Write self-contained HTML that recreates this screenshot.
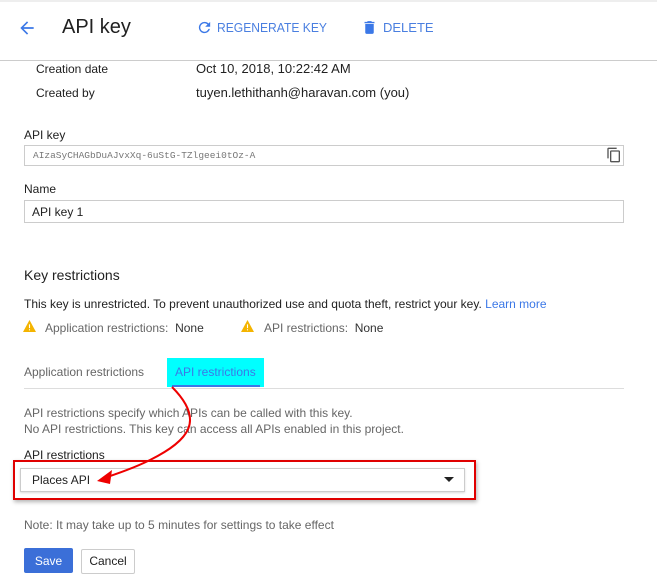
<!DOCTYPE html>
<html><head><style>
body{margin:0;width:657px;height:573px;background:#fff;font-family:"Liberation Sans",Arial,sans-serif;color:#212121;position:relative;overflow:hidden}
.a{position:absolute;white-space:nowrap}
.lbl{font-size:12px;color:#212121}
.in{position:absolute;border:1px solid #ccc;background:#fff;box-sizing:border-box}
.g{color:#666;font-size:12px}
</style></head><body>
<div class="a" style="left:0;top:0;width:657px;height:2px;background:#eee"></div>
<svg class="a" style="left:17px;top:18px" width="20" height="20" viewBox="0 0 24 24"><path d="M20 11H7.8l5.6-5.6L12 4l-8 8 8 8 1.4-1.4L7.8 13H20z" fill="#3b78e7"/></svg>
<div class="a" style="left:62px;top:16px;font-size:20px;color:#212121">API key</div>
<svg class="a" style="left:196px;top:19px" width="17" height="17" viewBox="0 0 24 24"><path d="M17.65 6.35A7.96 7.96 0 0 0 12 4a8 8 0 1 0 7.73 10h-2.08A6 6 0 1 1 12 6c1.66 0 3.14.69 4.22 1.78L13 11h7V4z" fill="#3b78e7"/></svg>
<div class="a" style="left:217px;top:20px;font-size:13px;color:#4a7fe0;transform:scaleX(.93);transform-origin:left">REGENERATE KEY</div>
<svg class="a" style="left:361px;top:19px" width="17" height="17" viewBox="0 0 24 24"><path d="M6 19c0 1.1.9 2 2 2h8c1.1 0 2-.9 2-2V7H6zM19 4h-3.5l-1-1h-5l-1 1H5v2h14z" fill="#3b78e7"/></svg>
<div class="a" style="left:383px;top:20px;font-size:13px;color:#4a7fe0">DELETE</div>
<div class="a" style="left:0;top:60px;width:657px;height:1px;background:#ccc"></div>
<div class="a lbl" style="left:36px;top:62px">Creation date</div>
<div class="a" style="left:196px;top:61px;font-size:13px">Oct 10, 2018, 10:22:42 AM</div>
<div class="a lbl" style="left:36px;top:86px">Created by</div>
<div class="a" style="left:196px;top:85px;font-size:13px">tuyen.lethithanh@haravan.com (you)</div>
<div class="a lbl" style="left:24px;top:128px">API key</div>
<div class="in" style="left:24px;top:145px;width:600px;height:21px"></div>
<div class="a" style="left:33px;top:150px;font-family:'Liberation Mono',monospace;font-size:9.5px;color:#777">AIzaSyCHAGbDuAJvxXq-6uStG-TZlgeei0tOz-A</div>
<svg class="a" style="left:606px;top:147px" width="16" height="16" viewBox="0 0 24 24"><path d="M16 1H4a2 2 0 0 0-2 2v14h2V3h12zm3 4H8a2 2 0 0 0-2 2v14a2 2 0 0 0 2 2h11a2 2 0 0 0 2-2V7a2 2 0 0 0-2-2zm0 16H8V7h11z" fill="#555"/></svg>
<div class="a lbl" style="left:24px;top:182px">Name</div>
<div class="in" style="left:24px;top:200px;width:600px;height:23px"></div>
<div class="a" style="left:32px;top:205px;font-size:12px">API key 1</div>
<div class="a" style="left:24px;top:267px;font-size:14px">Key restrictions</div>
<div class="a" style="left:24px;top:297px;font-size:12px">This key is unrestricted. To prevent unauthorized use and quota theft, restrict your key. <span style="color:#3b78e7">Learn more</span></div>
<svg class="a" style="left:23px;top:320px" width="13" height="12" viewBox="0 0 24 22"><path d="M12 0L0 22h24z" fill="#f4b400"/><path d="M11 8h2v7h-2zM11 17h2v2h-2z" fill="#fff"/></svg>
<div class="a g" style="left:45px;top:321px">Application restrictions:&nbsp; <span style="color:#333">None</span></div>
<svg class="a" style="left:241px;top:320px" width="13" height="12" viewBox="0 0 24 22"><path d="M12 0L0 22h24z" fill="#f4b400"/><path d="M11 8h2v7h-2zM11 17h2v2h-2z" fill="#fff"/></svg>
<div class="a g" style="left:264px;top:321px">API restrictions:&nbsp; <span style="color:#333">None</span></div>
<div class="a g" style="left:24px;top:365px">Application restrictions</div>
<div class="a" style="left:167px;top:358px;width:97px;height:29px;background:#00ffff"></div>
<div class="a" style="left:175px;top:365px;font-size:12px;color:#3b78e7">API restrictions</div>
<div class="a" style="left:172px;top:385px;width:88px;height:2px;background:#3b78e7"></div>
<div class="a" style="left:24px;top:388px;width:600px;height:1px;background:#ddd"></div>
<div class="a g" style="left:24px;top:406px">API restrictions specify which APIs can be called with this key.</div>
<div class="a g" style="left:24px;top:422px">No API restrictions. This key can access all APIs enabled in this project.</div>
<div class="a" style="left:24px;top:448px;font-size:12px">API restrictions</div>
<div class="a" style="left:13px;top:460px;width:459px;height:36px;border:2px solid #e00000;box-shadow:1px 2px 4px rgba(0,0,0,.3)"></div>
<div class="in" style="left:20px;top:468px;width:445px;height:24px;box-shadow:0 1px 2px rgba(0,0,0,.15)"></div>
<div class="a" style="left:32px;top:473px;font-size:12px">Places API</div>
<svg class="a" style="left:444px;top:477px" width="10" height="5" viewBox="0 0 10 5"><path d="M0 0h10L5 5z" fill="#222"/></svg>
<svg class="a" style="left:0;top:0" width="657" height="573"><path d="M172 387 C205 420,190 440,150 460 C130 470,115 474,105 478" stroke="#e00" stroke-width="2" fill="none"/><path d="M97 481 L112 470 L110 484 Z" fill="#e00"/></svg>
<div class="a g" style="left:24px;top:518px">Note: It may take up to 5 minutes for settings to take effect</div>
<div class="a" style="left:24px;top:548px;width:49px;height:25px;background:#3b6fd8;color:#fff;font-size:12px;text-align:center;line-height:26px;border-radius:2px">Save</div>
<div class="a" style="left:81px;top:549px;width:52px;height:23px;border:1px solid #ccc;font-size:12px;text-align:center;line-height:23px;border-radius:2px">Cancel</div>
</body></html>
